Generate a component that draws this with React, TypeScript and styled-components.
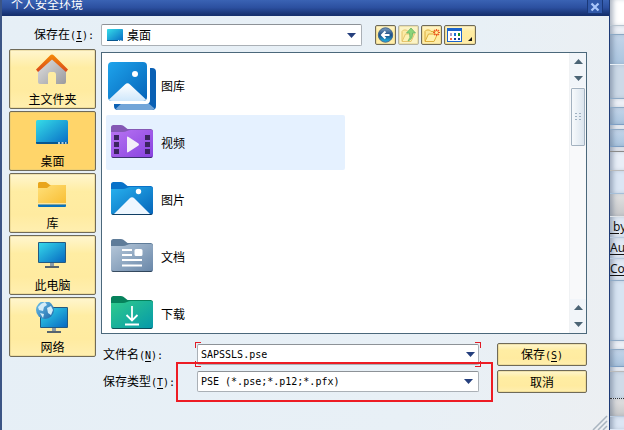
import React from 'react';
import styled, { createGlobalStyle, css } from 'styled-components';

const GlobalStyle = createGlobalStyle`
  *, *::before, *::after { box-sizing: border-box; }
  body {
    margin: 0;
    overflow: hidden;
    background: #e8f0f6;
    color: #000;
    font: 12px/16px "Noto Sans CJK SC", sans-serif;
  }
  button, input, select { font: inherit; color: inherit; margin: 0; padding: 0; border: 0; background: none; }
  svg { display: block; flex: none; }
`;

const Screen = styled.div`
  display: flex;
  min-height: 100vh;
`;

const Dialog = styled.main`
  position: relative;
  flex: 1;
  min-width: 0;
  display: flex;
  flex-direction: column;
  border-left: 2px solid #3c5585;
  border-right: 1px solid #1d3a76;
  background: linear-gradient(100deg, #e6eff6 0%, #e8f0f6 70%, #eceff2 100%);
`;

const TitleBar = styled.header`
  display: flex;
  justify-content: space-between;
  height: 16px;
  padding: 0 6px 0 9px;
  overflow: hidden;
  background: linear-gradient(#3a63b4, #2c50a0 50%, #16306e);
  border-bottom: 1px solid #16306e;
`;

const Title = styled.h1`
  margin: 0;
  color: #fff;
  font-size: 12px;
  font-weight: 400;
  line-height: 8px;
`;

const CloseButton = styled.button`
  display: grid;
  place-items: center;
  width: 16px;
  height: 14px;
  border: 1px solid #1a3878;
  border-top: 0;
  border-radius: 0 0 2px 2px;
  background: #3159aa;
`;

const Body = styled.div`
  flex: 1;
  display: flex;
  flex-direction: column;
  gap: 4px;
  padding: 8px 22px 37px 7px;
`;

const TopRow = styled.div`
  display: flex;
  align-items: center;
  height: 22px;
`;

const TopLabel = styled.label`
  flex: none;
  width: 92px;
  padding-left: 25px;
  line-height: 18px;
  white-space: nowrap;
`;

const Mono = styled.span`
  font-family: "DejaVu Sans Mono", monospace;
  font-size: 10px;
`;

const Key = styled.u`
  text-underline-offset: 2px;
`;

const Field = styled.div<{ $active?: boolean }>`
  position: relative;
  display: flex;
  align-items: center;
  height: 21px;
  padding: 0 5px 0 3px;
  border: 1px solid #aab0b6;
  border-top-color: #8d9297;
  border-radius: 2px;
  background: #fff;
  ${p => p.$active && css`padding-right: 1px;`}
`;

const Place = styled(Field)`
  flex: 1;
  max-width: 261px;
  height: 22px;
  padding: 0 5px;
  gap: 4px;
`;

const Select = styled.select<{ $mono?: boolean }>`
  flex: 1;
  min-width: 0;
  appearance: none;
  outline: 0;
  ${p => p.$mono && css`font: 10px/16px "DejaVu Sans Mono", monospace;`}
`;

const TextInput = styled.input`
  flex: 1;
  min-width: 0;
  outline: 0;
  font: 10px/16px "DejaVu Sans Mono", monospace;
`;

const ArrowButton = styled.button`
  display: grid;
  place-items: center;
  width: 14px;
  height: 16px;
`;

const Corner = styled.i<{ $v: 'top' | 'bottom'; $h: 'left' | 'right' }>`
  position: absolute;
  width: 6px;
  height: 6px;
  ${p => `${p.$v}: -3px; ${p.$h}: -3px; border-${p.$v}: 1px solid #e01b24; border-${p.$h}: 1px solid #e01b24;`}
`;

const Tools = styled.div`
  display: flex;
  gap: 2px;
  margin-left: 13px;
`;

const gold = css`
  border: 1px solid #6f6a58;
  border-radius: 2px;
  background: linear-gradient(#fff6cf, #ffeda3 30%, #ffeba0 70%, #ffefb0);
  box-shadow: inset 0 0 0 1px #d8c27a66;
`;

const ToolButton = styled.button<{ $wide?: boolean }>`
  ${gold}
  display: grid;
  place-items: center;
  width: ${p => (p.$wide ? 32 : 21)}px;
  height: 20px;
  &:disabled { border-color: #b3b2a4; background: #fbf3c6; }
`;

const Columns = styled.div`
  flex: 1;
  display: flex;
  gap: 5px;
`;

const Sidebar = styled.nav`
  flex: none;
  display: flex;
  flex-direction: column;
  gap: 2px;
  width: 87px;
  margin-top: -1px;
`;

const PlaceButton = styled.button<{ $current?: boolean }>`
  ${gold}
  display: flex;
  flex-direction: column;
  align-items: center;
  justify-content: space-between;
  height: 60px;
  padding: 4px 2px 1px;
  ${p => p.$current && css`background: #ffd56a;`}
`;

const Main = styled.div`
  flex: 1;
  min-width: 0;
  display: flex;
  flex-direction: column;
  margin-top: 2px;
`;

const FileBox = styled.section`
  position: relative;
  flex: 1 0 282px;
  border: 1px solid #4b687b;
  background: #fff;
  overflow: hidden;
`;

const Panes = styled.div`
  position: absolute;
  inset: 0;
  display: flex;
`;

const Files = styled.ul`
  flex: 1;
  display: flex;
  flex-direction: column;
  gap: 2px;
  margin: 0;
  padding: 5px 4px 0;
  list-style: none;
`;

const FileRow = styled.li<{ $hover?: boolean }>`
  flex: none;
  display: flex;
  align-items: center;
  gap: 3px;
  width: 52%;
  height: 55px;
  line-height: 14px;
  border-radius: 2px;
  background: ${p => (p.$hover ? '#e5f1ff' : 'transparent')};
`;

const ScrollBar = styled.div`
  display: flex;
  flex-direction: column;
  width: 17px;
  background: #f8f9fa;
  border-left: 1px solid #f0f2f4;
`;

const ScrollButton = styled.button`
  display: grid;
  place-items: center;
  height: 17px;
  background: #f1f5f9;
`;

const Track = styled.div`
  flex: 1;
  padding: 1px 1px 0;
`;

const Thumb = styled.div`
  display: grid;
  place-items: center;
  height: 58px;
  border: 1px solid #a3b2c0;
  border-radius: 1px;
  background: linear-gradient(90deg, #f7fafc, #dbe5ee);
`;

const Form = styled.form`
  position: relative;
  display: grid;
  grid-template-columns: 95px minmax(0, 1fr) 90px;
  align-items: center;
  row-gap: 4px;
  margin-top: 9px;
`;

const FormLabel = styled.label`
  padding-left: 2px;
  white-space: nowrap;
`;

const FieldCell = styled.div`
  padding: 0 18px 0 1px;
`;

const ActionButton = styled.button`
  ${gold}
  height: 23px;
  line-height: 18px;
`;

const Highlight = styled.div`
  position: absolute;
  left: 75px;
  right: 94px;
  bottom: -9px;
  height: 40px;
  border: 2px solid #ed1c24;
  pointer-events: none;
`;

const Grip = styled.div`
  position: absolute;
  right: 1px;
  bottom: 0;
`;

const Behind = styled.aside`
  flex: none;
  display: flex;
  flex-direction: column;
  width: 14px;
  overflow: hidden;
`;

const Band = styled.div<{ $h: number; $bg: string; $line?: string; $dotted?: boolean; $fill?: boolean }>`
  flex: ${p => (p.$fill ? 1 : 0)} 0 ${p => p.$h}px;
  background: ${p => p.$bg};
  border-bottom: 1px ${p => (p.$dotted ? 'dotted' : 'solid')} ${p => p.$line || 'transparent'};
  box-shadow: inset 5px 0 5px -2px #4a5f7a77;
`;

const BandLink = styled.a`
  display: block;
  color: #111;
  font: 12px/20px "Noto Sans", sans-serif;
  white-space: nowrap;
  text-underline-offset: 2px;
`;

const Arrow = ({ up, color = '#253f7d' }: { up?: boolean; color?: string }) => (
  <svg width="9" height="5" viewBox="0 0 9 5" aria-hidden="true">
    <path d={up ? 'M0 5L4.5 0L9 5Z' : 'M0 0L4.5 5L9 0Z'} fill={color} />
  </svg>
);

const Grad = ({ id, a, b }: { id: string; a: string; b: string }) => (
  <defs>
    <linearGradient id={id} x1="0" y1="0" x2="1" y2="1">
      <stop stopColor={a} />
      <stop offset="1" stopColor={b} />
    </linearGradient>
  </defs>
);

const DesktopIcon = ({ small }: { small?: boolean }) => (
  <svg width={small ? 16 : 34} height={small ? 12 : 36} viewBox={small ? '0 0 32 24' : '0 0 34 36'} aria-hidden="true">
    <Grad id={small ? 'deskS' : 'deskL'} a="#35dde8" b="#086bc5" />
    <g transform={small ? undefined : 'translate(0 4)'}>
      <rect width="32" height="24" rx="1.5" fill={`url(#${small ? 'deskS' : 'deskL'})`} />
      <path d="M0 22h32v.8q0 1.2-1.2 1.2H1.2Q0 24 0 22.8Z" fill="#07568f" />
      <path d="M22 22.2h2v1.6h-2zM25.500 22.200h2v1.600h-2zM29 22.200h1.500v1.600H29z" fill="#e8f6ff" />
    </g>
  </svg>
);

const HomeIcon = () => (
  <svg width="34" height="36" viewBox="0 0 34 36" aria-hidden="true">
    <defs>
      <linearGradient id="wall" x1="0" y1="0" x2="1" y2="1">
        <stop stopColor="#e4e4e4" /><stop offset="1" stopColor="#9a9a9e" />
      </linearGradient>
      <linearGradient id="roof" x1="0" y1="0" x2="0" y2="1">
        <stop stopColor="#f58a07" /><stop offset="1" stopColor="#d9481c" />
      </linearGradient>
    </defs>
    <path d="M2 15L16 3L30 15V28Q30 30 28 30H20V20.500Q20 18 18 18H14Q12 18 12 20.500V30H4Q2 30 2 28Z" fill="url(#wall)" />
    <path d="M0 15.500L14 1.500Q16-.5 18 1.500L32 15.500L30 18L16 5.500L2 18Z" fill="url(#roof)" />
  </svg>
);

const LibraryIcon = () => (
  <svg width="34" height="36" viewBox="0 0 34 36" aria-hidden="true">
    <Grad id="lib" a="#ffe07a" b="#f8bd31" />
    <path d="M2 5.500Q2 4 3.500 4H10L14 7H28.500Q30 7 30 8.500V14H2Z" fill="#e9a51b" />
    <path d="M2 10H11L15 7H30V27H2Z" fill="url(#lib)" />
    <path d="M2 25h28v1.500H2z" fill="#fbe6a5" />
    <path d="M2 26.500h28V28q0 1-1 1H3q-1 0-1-1Z" fill="#0872be" />
  </svg>
);

const Monitor = ({ id }: { id: string }) => (
  <>
    <Grad id={id} a="#35d8ea" b="#0769c1" />
    <path d="M12 20h4v4h-4z" fill="#8b9aa5" />
    <rect width="28" height="21" rx="1" fill="#245a81" />
    <rect x="1" y="1" width="26" height="19" fill={`url(#${id})`} />
    <path d="M7 24h14v2H7z" fill="#56646e" />
  </>
);

const ComputerIcon = () => (
  <svg width="34" height="36" viewBox="0 0 34 36" aria-hidden="true">
    <g transform="translate(2 2)"><Monitor id="pc" /></g>
  </svg>
);

const NetworkIcon = () => (
  <svg width="34" height="36" viewBox="0 0 34 36" aria-hidden="true">
    <g transform="translate(4 5)"><Monitor id="net" /></g>
    <Grad id="globe" a="#6ec3ea" b="#1d65a8" />
    <circle cx="9" cy="8" r="9" fill="url(#globe)" />
    <path d="M2 5Q5 1 9 0L11 3L8 5L7 9L3 8ZM11 6L15 4L17 8L15 13L12 11ZM4 11L8 12L7 16Z" fill="#d2ecf8" />
  </svg>
);

const GalleryIcon = () => (
  <svg width="52" height="52" viewBox="0 0 52 52" aria-hidden="true">
    <Grad id="gal" a="#1ea4ec" b="#0563b8" />
    <linearGradient id="hill" x1="0" y1="0" x2="0" y2="1"><stop stopColor="#fff" /><stop offset="1" stopColor="#cfe7fb" /></linearGradient>
    <rect x="8" y="8" width="42" height="42" rx="4" fill="#0a60b4" />
    <path d="M10 48.500L17 42H41L48.500 48.500Q47 50 46 50H12Q10.500 50 10 48.500Z" fill="#72a5d8" />
    <path d="M0 0H44V40Q44 44 40 44H0Z" fill="#fff" />
    <rect x="2" y="2" width="39" height="39" rx="4" fill="url(#gal)" />
    <path d="M3 39.500L19 24.500Q21.500 22 24 24.500L40 39.500Q38.500 41 37 41H6Q4 41 3 39.500Z" fill="url(#hill)" />
    <circle cx="29" cy="14" r="3" fill="#fff" />
  </svg>
);

type Kind = 'video' | 'picture' | 'document' | 'download';
const tones: Record<Kind, [string, string, string]> = {
  video: ['#8458b5', '#b873f2', '#8742df'],
  picture: ['#0872c9', '#28b1ee', '#0564b9'],
  document: ['#5f7c99', '#b5c7d9', '#6886a8'],
  download: ['#06825c', '#2fcb8c', '#0598aa'],
};

const FolderIcon = ({ kind }: { kind: Kind }) => {
  const [tab, a, b] = tones[kind];
  return (
    <svg width="52" height="52" viewBox="0 0 52 52" aria-hidden="true">
      <Grad id={kind} a={a} b={b} />
      <path d="M5 10.500Q5 8 7.500 8H15Q17 8 19 10L21.500 12H44.500Q47 12 47 14.500V20H5Z" fill={tab} />
      <path d="M5 15H17Q19 15 21 14T25 13H45Q47 13 47 15V38.500Q47 41 44.500 41H7.500Q5 41 5 38.500Z" fill={`url(#${kind})`} />
      <path d="M5.500 39.500Q6 41 7.500 41H44.500Q46 41 46.500 39.500L44.500 40H7.500Z" fill="#123a" />
      {kind === 'video' && (
        <>
          <path d="M8 18h5v5H8zM8 25h5v5H8zM8 32h5v5H8zM39 18h5v5h-5zM39 25h5v5h-5zM39 32h5v5h-5z" fill="#3b245f" />
          <path d="M21 20.500Q21 19 22.500 20L32.500 26.500Q33.500 27.500 32.500 28.500L22.500 35Q21 36 21 34.500Z" fill="#f4eef9" />
        </>
      )}
      {kind === 'picture' && (
        <>
          <path d="M8 40L23.500 24.500Q26 22 28.500 24.500L44 40Z" fill="#eef7ff" />
          <circle cx="32.500" cy="17.500" r="2.700" fill="#fff" />
        </>
      )}
      {kind === 'document' && (
        <path d="M16 18h10v2H16zM16 23h10v2H16zM16 28h20v2H16zM16 33.500h20v2H16zM30 18h5q1.500 0 1.500 1.500v4q0 1.500-1.500 1.500h-5q-1.500 0-1.500-1.500v-4Q28.500 18 30 18Z" fill="#fff" />
      )}
      {kind === 'download' && (
        <path d="M26 18V32M20.500 27L26 32.500L31.500 27M19 36.500H33" fill="none" stroke="#fff" strokeWidth="1.800" />
      )}
    </svg>
  );
};

const BackIcon = () => (
  <svg width="17" height="16" viewBox="0 0 17 16" aria-hidden="true">
    <defs>
      <linearGradient id="orb" x1="0" y1="0" x2="0" y2="1">
        <stop stopColor="#7f9fc0" /><stop offset=".5" stopColor="#1c4d85" /><stop offset="1" stopColor="#1fb8e8" />
      </linearGradient>
    </defs>
    <circle cx="8.500" cy="8" r="7.200" fill="url(#orb)" stroke="#40648d" />
    <path d="M12.500 8H5M8.500 4.500L5 8L8.500 11.500" fill="none" stroke="#fff" strokeWidth="2" />
  </svg>
);

const OpenFolder = () => (
  <>
    <path d="M2 14V4.500L3.500 3H6.500L8 4.500H12V7" fill="#fbe696" stroke="#dcae3d" />
    <path d="M2 14.500L5.500 7H14.500L11 14.500Z" fill="#fff0ac" stroke="#dcae3d" />
  </>
);

const UpIcon = () => (
  <svg width="17" height="17" viewBox="0 0 17 17" aria-hidden="true">
    <g opacity=".65"><OpenFolder /></g>
    <path d="M8 14Q11 11 9.500 6H6.500L11 1L15.500 6H12.500Q13 12 8 14Z" fill="#8bd479" stroke="#6ab566" strokeWidth=".8" />
  </svg>
);

const NewFolderIcon = () => (
  <svg width="17" height="17" viewBox="0 0 17 17" aria-hidden="true">
    <OpenFolder />
    <path d="M13.500 2V9M10 5.500H17M11 3L16 8M16 3L11 8" stroke="#ee5a24" strokeWidth="1.200" />
    <circle cx="13.500" cy="5.500" r="1.500" fill="#fff39a" />
  </svg>
);

const ViewIcon = () => (
  <svg width="28" height="16" viewBox="0 0 28 16" aria-hidden="true">
    <path d="M1 1h15v14H1z" fill="#1a63cc" />
    <path d="M2 4h13v10H2z" fill="#fff" />
    <path d="M4 6h2v3H4z" fill="#a89ccd" /><path d="M8 6h2v3H8z" fill="#1671d4" /><path d="M12 6h2v3h-2z" fill="#159425" />
    <path d="M4 11h2v2H4z" fill="#ee6a43" /><path d="M8 11h2v2H8z" fill="#123c9b" /><path d="M12 11h2v2h-2z" fill="#123c9b" />
    <path d="M26 10V14H22Z" fill="#111" />
  </svg>
);

const places = [
  { name: '主文件夹', icon: <HomeIcon /> },
  { name: '桌面', icon: <DesktopIcon />, current: true },
  { name: '库', icon: <LibraryIcon /> },
  { name: '此电脑', icon: <ComputerIcon /> },
  { name: '网络', icon: <NetworkIcon /> },
];

const files = [
  { name: '图库', icon: <GalleryIcon /> },
  { name: '视频', icon: <FolderIcon kind="video" />, hover: true },
  { name: '图片', icon: <FolderIcon kind="picture" /> },
  { name: '文档', icon: <FolderIcon kind="document" /> },
  { name: '下载', icon: <FolderIcon kind="download" /> },
];

const blue = 'linear-gradient(#c3d5e9, #aac5df)';

export default function App() {
  return (
    <>
      <GlobalStyle />
      <Screen>
        <Dialog>
          <TitleBar>
            <Title>个人安全环境</Title>
            <CloseButton aria-label="关闭">
              <svg width="10" height="10" viewBox="0 0 10 10"><path d="M1.500 1.500L8.500 8.500M8.500 1.500L1.500 8.500" stroke="#a9c6fa" strokeWidth="2.200" /></svg>
            </CloseButton>
          </TitleBar>
          <Body>
            <TopRow>
              <TopLabel htmlFor="place">保存在<Mono>(<Key>I</Key>):</Mono></TopLabel>
              <Place>
                <DesktopIcon small />
                <Select id="place"><option>桌面</option></Select>
                <Arrow />
              </Place>
              <Tools>
                <ToolButton aria-label="后退"><BackIcon /></ToolButton>
                <ToolButton aria-label="向上" disabled><UpIcon /></ToolButton>
                <ToolButton aria-label="新建文件夹"><NewFolderIcon /></ToolButton>
                <ToolButton aria-label="查看" $wide><ViewIcon /></ToolButton>
              </Tools>
            </TopRow>
            <Columns>
              <Sidebar>
                {places.map(p => (
                  <PlaceButton key={p.name} $current={p.current}>{p.icon}{p.name}</PlaceButton>
                ))}
              </Sidebar>
              <Main>
                <FileBox>
                  <Panes>
                    <Files>
                      {files.map(f => (
                        <FileRow key={f.name} $hover={f.hover}>{f.icon}<span>{f.name}</span></FileRow>
                      ))}
                    </Files>
                    <ScrollBar>
                      <ScrollButton aria-label="向上滚动"><Arrow up color="#4b6475" /></ScrollButton>
                      <ScrollButton aria-label="向下滚动"><Arrow color="#4b6475" /></ScrollButton>
                      <Track>
                        <Thumb>
                          <svg width="6" height="9" viewBox="0 0 6 9" aria-hidden="true">
                            <path d="M0 0h2v1H0zM4 0h2v1H4zM0 3h2v1H0zM4 3h2v1H4zM0 6h2v1H0zM4 6h2v1H4z" fill="#9fb0c0" />
                          </svg>
                        </Thumb>
                      </Track>
                      <ScrollButton aria-label="向上滚动"><Arrow up color="#4b6475" /></ScrollButton>
                      <ScrollButton aria-label="向下滚动"><Arrow color="#4b6475" /></ScrollButton>
                    </ScrollBar>
                  </Panes>
                </FileBox>
                <Form onSubmit={e => e.preventDefault()}>
                  <FormLabel htmlFor="name">文件名<Mono>(<Key>N</Key>):</Mono></FormLabel>
                  <FieldCell>
                    <Field $active>
                      <TextInput id="name" defaultValue="SAPSSLS.pse" />
                      <ArrowButton type="button" aria-label="历史文件名"><Arrow /></ArrowButton>
                      <Corner $v="top" $h="left" /><Corner $v="top" $h="right" />
                      <Corner $v="bottom" $h="left" /><Corner $v="bottom" $h="right" />
                    </Field>
                  </FieldCell>
                  <ActionButton type="submit">保存<Mono>(<Key>S</Key>)</Mono></ActionButton>
                  <FormLabel htmlFor="type">保存类型<Mono>(<Key>T</Key>):</Mono></FormLabel>
                  <FieldCell>
                    <Field>
                      <Select id="type" $mono><option>PSE (*.pse;*.p12;*.pfx)</option></Select>
                      <Arrow />
                    </Field>
                  </FieldCell>
                  <ActionButton type="button">取消</ActionButton>
                  <Highlight />
                </Form>
              </Main>
            </Columns>
          </Body>
          <Grip>
            <svg width="16" height="16" viewBox="0 0 16 16" aria-hidden="true">
              <path d="M1 16L15 2M6 16L15 7M11 16L15 12" stroke="#a9b5c0" strokeWidth="1.500" />
            </svg>
          </Grip>
        </Dialog>
        <Behind>
          <Band $h={26} $bg="#fff" $line="#b8c4cf" />
          <Band $h={9} $bg="#edf1f7" $line="#8ba8c4" />
          <Band $h={30} $bg={blue} $line="#e9f0f6" />
          <Band $h={34} $bg="#ccd9e7" $line="#8faac6" />
          <Band $h={9} $bg="#edf1f7" $line="#8faac6" />
          <Band $h={17} $bg={blue} $line="#7e9fc4" />
          <Band $h={5} $bg="#edf1f7" $line="#8faac6" />
          <Band $h={17} $bg={blue} $line="#7e9fc4" />
          <Band $h={5} $bg="#e4e7ee" $line="#8a8a8a" />
          <Band $h={19} $bg="#e8eef7" $line="#b9b9b9" />
          <Band $h={23} $bg="#dbe6f4" $line="#a5bfd9" />
          <Band $h={23} $bg="linear-gradient(#e1e1e1, #c6c7c9)" $line="#dfe3e8" />
          <Band $h={21} $bg="#dfe8f3" $line="#b9cade"><BandLink href="#by">&nbsp;by</BandLink></Band>
          <Band $h={21} $bg="#dfe8f3" $line="#b9cade"><BandLink href="#au">Au</BandLink></Band>
          <Band $h={22} $bg="#dfe8f3" $line="#8faac6"><BandLink href="#co">Co</BandLink></Band>
          <Band $h={60} $bg="#d7e4f2" $line="#8faac6" />
          <Band $h={9} $bg="#edf1f7" $line="#8faac6" />
          <Band $h={17} $bg={blue} $line="#7e9fc4" />
          <Band $h={5} $bg="#edf1f7" $line="#b9b9b9" />
          <Band $h={27} $bg="#cfdbe8" $line="#333" $dotted />
          <Band $h={18} $bg="linear-gradient(#e1e1e1, #c6c7c9)" $line="#b9cade" />
          <Band $h={13} $bg="#dbe6f4" $fill />
        </Behind>
      </Screen>
    </>
  );
}
